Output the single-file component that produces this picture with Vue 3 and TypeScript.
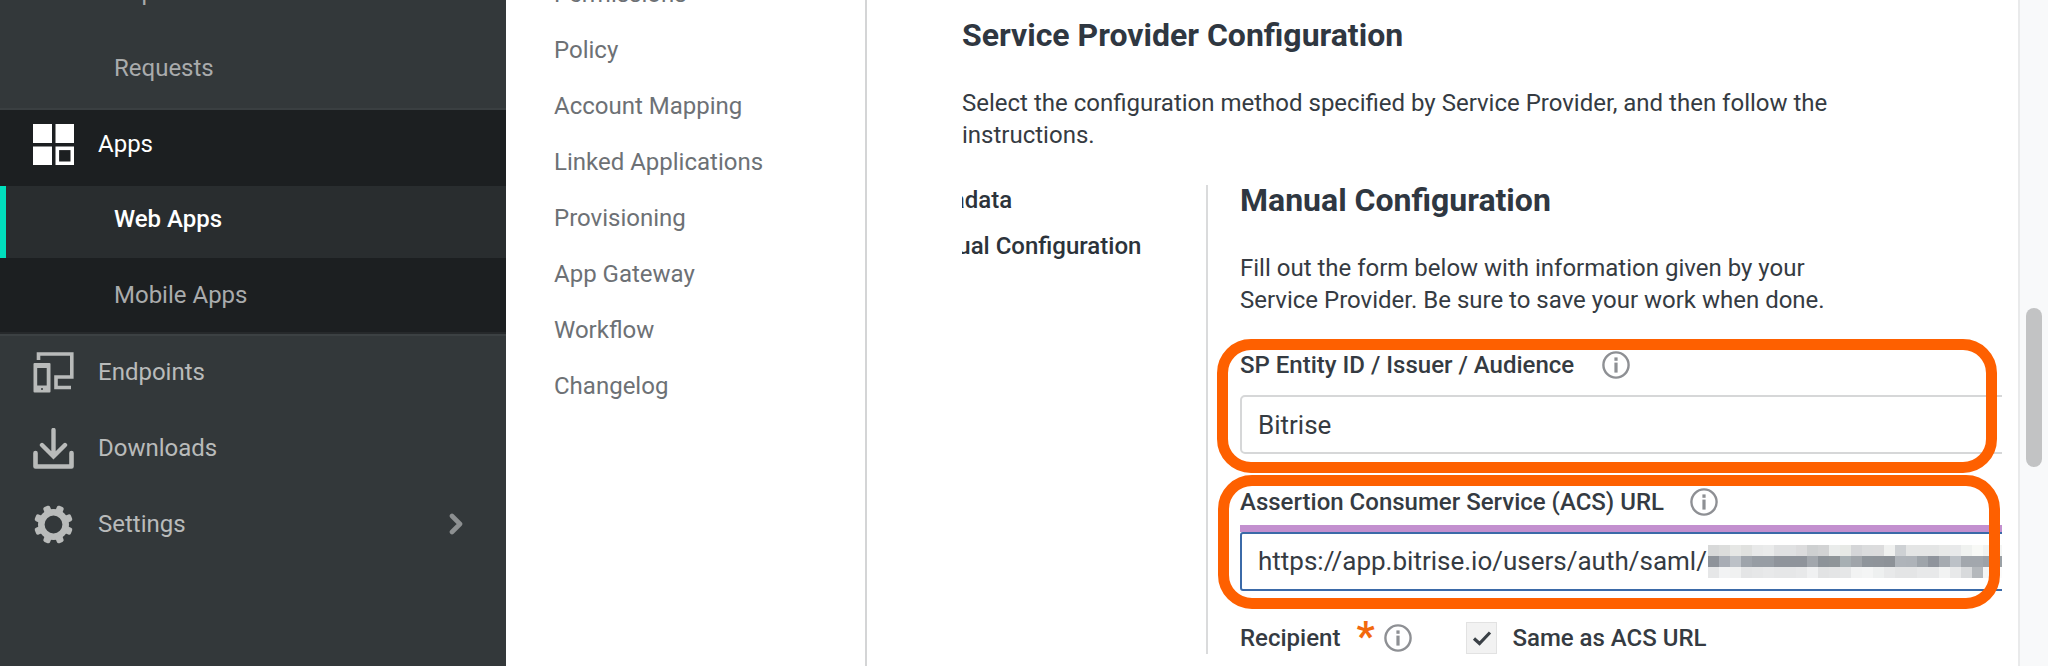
<script setup lang="ts">
const menu = ['Permissions', 'Policy', 'Account Mapping', 'Linked Applications', 'Provisioning', 'App Gateway', 'Workflow', 'Changelog']
const row1 = ['d8d9d9','dcdddc','e6e7e5','e0e1df','e8e9e9','eaebeb','e0e1e2','e0e1e2','dcdcdd','ced0d1','d2d3d4','eaeceb','e7e9e6','d5d6d8','dbdcdd','dcdcdd','f0f1f0','ced1d4','e4e5e5','e4e5e5','e4e5e5','e8e9e8','e8e9ea','f0f2f0','f8f9f6','f1f2f0','f4f5f4']
const row2 = ['8e939a','a8adb5','bcc1c7','9ea4ab','979da4','979da4','8f949b','8f949b','8f949b','a2a7ad','8d9399','8f9599','a7afb3','a0a5aa','8f959b','8f949a','8d9298','afb4ba','aeb3b9','9ea4aa','8f949c','a6abb1','bcc1c7','a2a7ad','a2a7ad','9da2a8','9aa0a5']
const row3 = ['e6e7e8','f2f3f4','f0f1f1','e4e5e6','e6e7e8','e8e9ea','e6e7e8','e6e7e8','e8e9ea','f0f1f2','e2e3e4','e4e5e6','e6e7e8','f2f3f3','f4f5f5','eef0f0','e8e9ea','e4e5e6','e4e5e6','e8e9ea','e8e9ea','f2f3f3','e8e9ea','d8dadc','b4b8bc','f4f5f5','fbfbfb']
const cells = [...row1, ...row2, ...row3]
const teeth = [22.5, 67.5, 112.5, 157.5, 202.5, 247.5, 292.5, 337.5]
</script>

<template>
  <div class="page">
    <aside class="sidebar">
      <div class="side-row sub muted scrolled">Reports</div>
      <div class="side-row sub muted">Requests</div>
      <div class="group">
        <div class="side-row head active">
          <svg class="ico" viewBox="0 0 41 41" width="41" height="41">
            <rect x="0" y="0" width="19" height="19" fill="#fff" />
            <rect x="22.5" y="0" width="18.5" height="19" fill="#fff" />
            <rect x="0" y="22.5" width="19" height="18.5" fill="#fff" />
            <rect x="24.3" y="24.3" width="15" height="15" fill="none" stroke="#fff" stroke-width="3.6" />
          </svg>
          <span>Apps</span>
        </div>
        <div class="side-row sub selected">Web Apps</div>
        <div class="side-row sub muted tall">Mobile Apps</div>
      </div>
      <div class="side-row head">
        <svg class="ico" viewBox="0 0 41 41" width="41" height="41">
          <path d="M5.5 8V2H38.8V25H23V35.5H38" fill="none" stroke="#b9bbba" stroke-width="3.6" />
          <rect x="0.5" y="11" width="17" height="29.6" rx="1" fill="#b9bbba" />
          <rect x="4.2" y="16" width="9.5" height="17.5" fill="#33383a" />
          <circle cx="9" cy="37" r="1" fill="#33383a" />
        </svg>
        <span>Endpoints</span>
      </div>
      <div class="side-row head">
        <svg class="ico" viewBox="0 0 41 41" width="41" height="41">
          <path d="M20.5 2V27M9 17L20.5 28.5L32 17" fill="none" stroke="#b9bbba" stroke-width="4.4" stroke-linecap="round" />
          <path d="M2.5 25V38.5H38.5V25" fill="none" stroke="#b9bbba" stroke-width="4.6" stroke-linejoin="round" stroke-linecap="round" />
        </svg>
        <span>Downloads</span>
      </div>
      <div class="side-row head">
        <svg class="ico" viewBox="0 0 41 41" width="41" height="41">
          <g transform="translate(20.5 20.5)">
            <rect v-for="a in teeth" :key="a" x="-3.6" y="-19.5" width="7.2" height="8" rx="2" fill="#b9bbba" :transform="`rotate(${a})`" />
            <circle r="12.2" fill="none" stroke="#b9bbba" stroke-width="6.6" />
          </g>
        </svg>
        <span>Settings</span>
        <svg class="chev" viewBox="0 0 16 22" width="16" height="22">
          <path d="M3 3L11 11L3 19" fill="none" stroke="#8d9091" stroke-width="4.6" stroke-linejoin="round" stroke-linecap="round" />
        </svg>
      </div>
    </aside>

    <nav class="menu">
      <div v-for="m in menu" :key="m" class="menu-item">{{ m }}</div>
    </nav>

    <main class="content">
      <h2 class="title">Service Provider Configuration</h2>
      <p class="lead">Select the configuration method specified by Service Provider, and then follow the instructions.</p>
      <div class="panel">
        <div class="tabs">
          <div class="tab">Metadata</div>
          <div class="tab">Manual Configuration</div>
        </div>
        <section class="form">
          <h3 class="title sub-title">Manual Configuration</h3>
          <p class="intro">Fill out the form below with information given by your Service Provider. Be sure to save your work when done.</p>

          <div class="field first">
            <div class="mark mark-a"></div>
            <div class="label-row">
              <label>SP Entity ID / Issuer / Audience</label>
              <svg class="info" viewBox="0 0 28 28" width="28" height="28">
                <circle cx="14" cy="14" r="12.6" fill="none" stroke="#8e9094" stroke-width="2.4" />
                <rect x="12.4" y="6.4" width="3.2" height="3.4" fill="#8e9094" />
                <rect x="12.4" y="11.6" width="3.2" height="10" fill="#8e9094" />
              </svg>
            </div>
            <div class="clip">
              <div class="input">Bitrise</div>
            </div>
          </div>

          <div class="field second">
            <div class="mark mark-b"></div>
            <div class="label-row acs">
              <label>Assertion Consumer Service (ACS) URL</label>
              <svg class="info" viewBox="0 0 28 28" width="28" height="28">
                <circle cx="14" cy="14" r="12.6" fill="none" stroke="#8e9094" stroke-width="2.4" />
                <rect x="12.4" y="6.4" width="3.2" height="3.4" fill="#8e9094" />
                <rect x="12.4" y="11.6" width="3.2" height="10" fill="#8e9094" />
              </svg>
            </div>
            <div class="clip">
              <div class="bar"></div>
              <div class="input focus">
                <span>https://app.bitrise.io/users/auth/saml/</span>
                <div class="blur">
                  <i v-for="(c, i) in cells" :key="i" :style="{ background: '#' + c }"></i>
                </div>
              </div>
            </div>
          </div>

          <div class="recipient">
            <label>Recipient</label>
            <span class="star">*</span>
            <svg class="info" viewBox="0 0 28 28" width="28" height="28">
              <circle cx="14" cy="14" r="12.6" fill="none" stroke="#8e9094" stroke-width="2.4" />
              <rect x="12.4" y="6.4" width="3.2" height="3.4" fill="#8e9094" />
              <rect x="12.4" y="11.6" width="3.2" height="10" fill="#8e9094" />
            </svg>
            <span class="check">
              <svg viewBox="0 0 20 16" width="20" height="16">
                <path d="M2 8.5L7.5 13.5L18 2.5" fill="none" stroke="#3a4046" stroke-width="3.2" />
              </svg>
            </span>
            <label>Same as ACS URL</label>
          </div>
        </section>
      </div>
    </main>

    <div class="track"><div class="thumb"></div></div>
  </div>
</template>

<style scoped>
.page {
  display: flex;
  width: 2048px;
  height: 666px;
  overflow: hidden;
  background: #fff;
  font-family: Roboto, "Liberation Sans", sans-serif;
  font-size: 24px;
  color: #353b42;
}
.sidebar {
  flex: none;
  width: 506px;
  height: 666px;
  background: #33383a;
  overflow: hidden;
  display: flex;
  flex-direction: column;
  color: #b9bbba;
}
.side-row {
  flex: none;
  display: flex;
  align-items: center;
  height: 76px;
}
.scrolled {
  margin-top: -46px;
}
.sub {
  padding-left: 114px;
}
.muted {
  color: #a9abac;
}
.head {
  padding-left: 33px;
}
.head .ico {
  flex: none;
  margin-right: 24px;
}
.chev {
  margin-left: auto;
  margin-right: 41px;
}
.group {
  flex: none;
  margin-top: 4px;
  background: #1c1f21;
  border-bottom: 2px solid #26292b;
  box-shadow: 0 2px 0 #3c4143, 0 -2px 0 #3a3f41;
}
.active {
  height: 68px;
  padding-bottom: 8px;
  color: #fff;
}
.selected {
  height: 66px;
  padding-bottom: 6px;
  background: #292d2f;
  color: #fff;
  font-weight: 500;
  border-left: 6px solid #00dfbd;
  padding-left: 108px;
}
.tall {
  height: 74px;
}
.menu {
  flex: none;
  width: 361px;
  box-sizing: border-box;
  border-right: 2px solid #d4d5d6;
  padding-left: 48px;
  overflow: hidden;
}
.menu-item {
  height: 56px;
  line-height: 56px;
  color: #6d7175;
}
.menu-item:first-child {
  margin-top: -34px;
}
.content {
  flex: none;
  width: 1151px;
  overflow: hidden;
  padding-top: 15px;
  box-sizing: border-box;
}
.title {
  margin: 0;
  font-size: 32px;
  font-weight: 700;
  line-height: 40px;
  color: #2f3741;
}
.content > .title,
.lead {
  margin-left: 95px;
}
.lead {
  margin-top: 32px;
  margin-bottom: 0;
  width: 900px;
  line-height: 32px;
}
.panel {
  display: flex;
  margin-top: 34px;
  margin-left: 95px;
}
.tabs {
  flex: none;
  width: 244px;
  overflow: hidden;
  font-weight: 500;
  color: #2c333a;
}
.tab {
  height: 46px;
  line-height: 30px;
  margin-left: -52px;
  white-space: nowrap;
}
.form {
  flex: none;
  width: 806px;
  border-left: 2px solid #dadbdc;
  padding-left: 32px;
  box-sizing: border-box;
}
.sub-title {
  line-height: 30px;
}
.intro {
  margin: 37px 0 0;
  width: 590px;
  line-height: 32px;
}
.field {
  position: relative;
}
.first {
  margin-top: 33px;
}
.second {
  margin-top: 32px;
}
.mark {
  position: absolute;
  border: 11px solid #fe6000;
  box-sizing: border-box;
  border-radius: 34px;
  pointer-events: none;
  z-index: 1;
}
.mark-a {
  left: -23px;
  top: -10px;
  width: 780px;
  height: 134px;
}
.mark-b {
  left: -22px;
  top: -11px;
  width: 782px;
  height: 134px;
}
.label-row {
  display: flex;
  align-items: center;
  height: 32px;
  gap: 28px;
}
.acs {
  gap: 26px;
}
label {
  font-weight: 500;
  white-space: nowrap;
}
.info {
  flex: none;
}
.clip {
  width: 762px;
  overflow: hidden;
  margin-top: 14px;
}
.acs + .clip {
  margin-top: 7px;
}
.input {
  display: flex;
  align-items: center;
  width: 800px;
  height: 59px;
  box-sizing: border-box;
  border: 2px solid #d6d7d8;
  border-radius: 5px;
  padding-left: 16px;
  font-size: 26px;
  white-space: nowrap;
}
.bar {
  height: 7px;
  background: #c390cf;
}
.focus {
  border-color: #3b6aa8;
  border-radius: 3px;
  padding-bottom: 1px;
}
.blur {
  flex: none;
  display: grid;
  grid-template-columns: repeat(27, 11px);
  grid-auto-rows: 11px;
  margin-left: 1px;
}
.blur i {
  display: block;
}
.recipient {
  display: flex;
  align-items: center;
  height: 32px;
  margin-top: 31px;
}
.star {
  width: 18px;
  margin-left: 16px;
  margin-right: 10px;
  color: #f2690d;
  font-size: 40px;
  font-weight: 700;
  line-height: 32px;
  height: 32px;
  transform: translateY(-1px);
}
.check {
  flex: none;
  display: flex;
  align-items: center;
  justify-content: center;
  width: 31px;
  height: 32px;
  margin-left: 54px;
  margin-right: 15px;
  background: #f2f2f2;
  box-shadow: inset 0 0 0 1px #e2e2e2;
}
.track {
  flex: none;
  width: 30px;
  height: 666px;
  box-sizing: border-box;
  background: #f8f9fa;
  border-left: 2px solid #e9eaeb;
  padding-top: 308px;
  padding-left: 6px;
}
.thumb {
  width: 16px;
  height: 159px;
  border-radius: 8px;
  background: #c2c3c4;
}
</style>
